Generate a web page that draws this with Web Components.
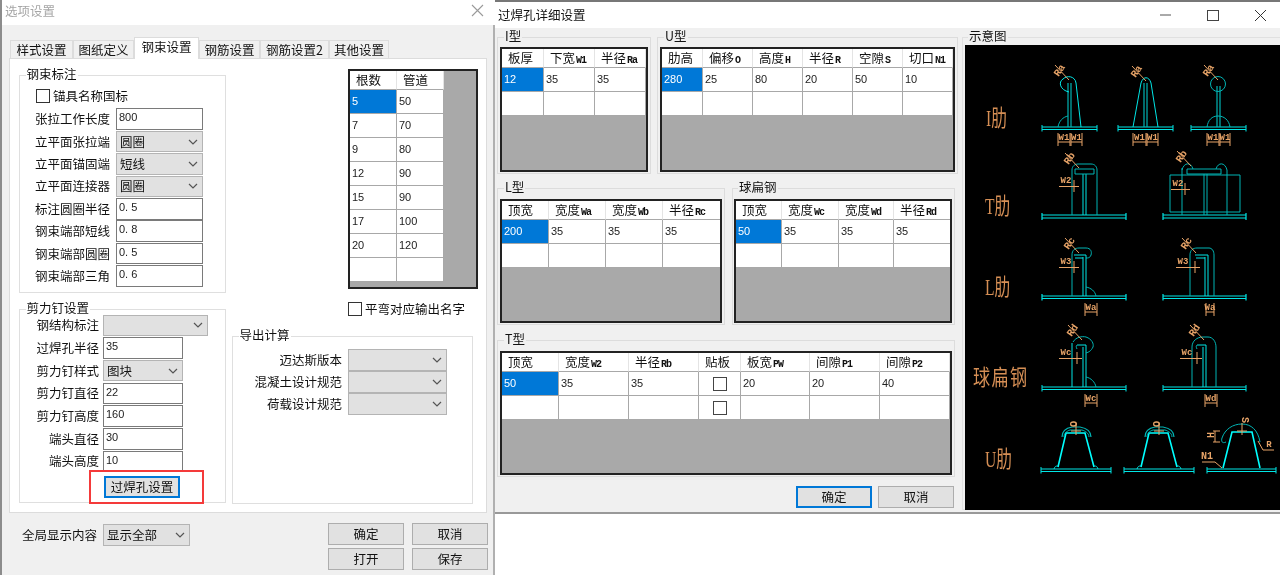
<!DOCTYPE html>
<html lang="zh">
<head>
<meta charset="utf-8">
<title>选项设置</title>
<style>
html, body { margin: 0; padding: 0; background: #fff; }
body { width: 1280px; height: 575px; overflow: hidden; font: 12.5px/16px "Noto Sans CJK SC", "Liberation Sans", sans-serif; color: #111; }
</style>
</head>
<body>
<app-desktop>
  <options-dialog></options-dialog>
  <hole-dialog></hole-dialog>
</app-desktop>

<script>
const NUM_FONT = '"Liberation Sans", "Noto Sans CJK SC", sans-serif';

class ShadowEl extends HTMLElement {
    constructor() {
        super();
        this.attachShadow({ mode: 'open' });
    }
    connectedCallback() {
        this.shadowRoot.innerHTML = this.markup();
    }
}

class AppDesktop extends ShadowEl {
    markup() {
        return `<style>
            :host { display: flex; width: 1280px; height: 575px; align-items: flex-start; background: #fff; filter: blur(.3px); }
        </style><slot></slot>`;
    }
}

// group box, legend sits on the border
class GroupBox extends ShadowEl {
    markup() {
        return `<style>
            :host { display: block; box-sizing: border-box; }
            fieldset { box-sizing: border-box; height: 100%; margin: 0; padding: 0; border: 1px solid var(--line, #dcdcdc); min-width: 0; }
            legend { margin-left: var(--lg, 6px); padding: 0 1px; height: 16px; line-height: 14px; white-space: nowrap; }
        </style>
        <fieldset><legend>${this.getAttribute('label')}</legend><slot></slot></fieldset>`;
    }
}

class FormRow extends ShadowEl {
    markup() {
        return `<style>
            :host { display: flex; align-items: center; height: var(--row, 22.4px); }
            .lb { box-sizing: border-box; width: var(--lw, 80px); padding-right: var(--lp, 6px); text-align: var(--la, left); white-space: nowrap; flex: none; }
        </style><div class="lb">${this.getAttribute('label')}</div><slot></slot>`;
    }
}

class TextBox extends ShadowEl {
    markup() {
        return `<style>
            :host { display: block; box-sizing: border-box; width: var(--cw, 87px); height: 21.5px; background: #fff; border: 1px solid #7a7a7a; padding-left: 2px; font: 11px/17px ${NUM_FONT}; color: #222; flex: none; }
        </style>${this.getAttribute('value')}`;
    }
}

class ComboBox extends ShadowEl {
    markup() {
        return `<style>
            :host { display: flex; box-sizing: border-box; width: var(--cw, 87px); height: 21.5px; align-items: center; justify-content: space-between; background: #e1e1e1; border: 1px solid #b4b4b4; padding: 0 4px 0 3px; flex: none; }
            svg { width: 10px; height: 6px; flex: none; }
        </style><span>${this.getAttribute('value') || ''}</span>
        <svg viewBox="0 0 10 6"><path d="M1 1l4 4 4-4" fill="none" stroke="#555" stroke-width="1.2"/></svg>`;
    }
}

class CheckBox extends ShadowEl {
    markup() {
        return `<style>
            :host { display: flex; align-items: center; gap: 3px; white-space: nowrap; }
            i { display: block; box-sizing: border-box; width: 14px; height: 14px; background: #fff; border: 1px solid #333; flex: none; }
        </style><i></i><slot></slot>`;
    }
}

class PushButton extends ShadowEl {
    markup() {
        return `<style>
            :host { display: flex; box-sizing: border-box; width: 76px; height: 22px; align-items: center; justify-content: center; background: #e1e1e1; border: 1px solid #adadad; flex: none; }
            :host([focused]) { border: 2px solid #0078d7; }
        </style><slot></slot>`;
    }
}

// red annotation frame drawn over the button
class RedMark extends ShadowEl {
    markup() {
        return `<style>
            :host { display: block; position: relative; width: fit-content; }
            .mark { position: absolute; left: -15px; top: -6px; width: 115px; height: 34px; box-sizing: border-box; border: 2.5px solid #f43a3a; pointer-events: none; }
        </style><slot></slot><div class="mark"></div>`;
    }
}

// cols="42,51,51" head="板厚|下宽W1" rows="12,35,35;,,"   a cell holding [] is a checkbox
class DataGrid extends ShadowEl {
    markup() {
        const cols = this.getAttribute('cols').split(',').map(c => c + 'px').join(' ');
        const head = this.getAttribute('head').split('|');
        const rows = this.getAttribute('rows').split(';').map(r => r.split(','));
        const headHtml = head.map(h => `<div class="h">${h.replace(/[A-Za-z0-9]+/, m => `<b>${m}</b>`)}</div>`).join('');
        const rowHtml = rows.map((r, ri) => r.map((c, ci) => {
            if (c === '[]') return `<div class="c box"><i></i></div>`;
            return `<div class="c${ri === 0 && ci === 0 ? ' sel' : ''}">${c}</div>`;
        }).join('')).join('');
        return `<style>
            :host { display: block; box-sizing: border-box; height: var(--h, 125px); background: #a9a9a9; border: 2px solid #222; overflow: hidden; }
            .g { display: grid; grid-template-columns: ${cols}; grid-auto-rows: 24px; grid-template-rows: var(--hh, 19px); width: fit-content; background: #fff; }
            .h { box-sizing: border-box; border-right: 1px solid #e4e4e4; border-bottom: 1px solid #a8a8a8; padding-left: 6px; line-height: 17px; white-space: nowrap; overflow: hidden; }
            .h b { font: 700 10px/17px "Liberation Mono", monospace; letter-spacing: -1px; margin-left: 1px; }
            .c { box-sizing: border-box; border-right: 1px solid #a8a8a8; border-bottom: 1px solid #a8a8a8; padding-left: 2px; font: 11px/23px ${NUM_FONT}; color: #222; }
            .sel { background: #0078d7; color: #fff; }
            .box { display: flex; align-items: center; justify-content: center; padding: 0; }
            .box i { display: block; box-sizing: border-box; width: 14px; height: 14px; border: 1px solid #444; }
        </style><div class="g">${headHtml}${rowHtml}</div>`;
    }
}

class OptionsDialog extends ShadowEl {
    markup() {
        const tabs = ['样式设置', '图纸定义', '钢束设置', '钢筋设置', '钢筋设置2', '其他设置'];
        const widths = [63, 61, 65, 61, 69, 60];
        const tabHtml = tabs.map((t, i) => `<div class="tab${i === 2 ? ' on' : ''}" style="width:${widths[i]}px">${t}</div>`).join('');
        return `<style>
            :host { display: block; box-sizing: border-box; width: 495px; height: 575px; background: #f0f0f0; border-left: 2px solid #8c8c8c; border-right: 2px solid #b0b0b0; flex: none; --lg: 5.5px; }
            .title { display: flex; justify-content: space-between; align-items: center; box-sizing: border-box; height: 25px; margin-right: -2px; padding: 0 11px 4px 3px; background: #fff; color: #a6a6a6; }
            .title svg { width: 13px; height: 13px; }
            .tabs { display: flex; align-items: flex-end; height: 21px; margin: 12px 0 0 8px; }
            .tab { box-sizing: border-box; height: 18px; text-align: center; line-height: 17px; border: 1px solid #dcdcdc; border-bottom: 0; margin-right: 0; background: #f0f0f0; white-space: nowrap; }
            .tab.on { height: 22px; line-height: 18px; background: #fff; margin-bottom: -1px; position: relative; z-index: 1; }
            .panel { box-sizing: border-box; width: 478px; height: 455px; margin-left: 7px; background: #fff; border: 1px solid #dcdcdc; padding: 8px 0 0 9px; display: grid; grid-template-columns: 207px 241px; column-gap: 6px; }
            .col { display: flex; flex-direction: column; }
            .g1 { height: 226px; --lw: 81px; --cw: 87px; padding: 0; }
            .inner1 { padding: 5px 0 0 15px; }
            .chk { height: 16px; margin-bottom: 4px; margin-left: 1px; }
            .g2 { height: 202px; margin-top: 8px; }
            .inner2 { margin-top: -3px; --lw: 83px; --lp: 4px; --la: right; --cw: 80px; --row: 22.7px; }
            .wide { --cw: 105px; }
            .btnwrap { margin: 3px 0 0 84px; }
            .side { padding-left: 116px; height: 220px; margin-top: 2px; }
            .side data-grid { width: 130px; --h: 220px; }
            .side2 { margin: 12px 0 0 116px; }
            .g3 { height: 176px; margin-top: 11px; }
            .inner3 { padding: 5px 0 0 0; --lw: 115px; --lp: 6px; --la: right; --cw: 99px; --row: 22px; }
            .foot { display: flex; justify-content: space-between; padding: 10px 5px 0 20px; }
            .foot-left { --lw: 81px; --cw: 87px; --row: 22px; margin-top: 1px; height: 22px; }
            .btns { display: grid; grid-template-columns: 76px 76px; column-gap: 8px; row-gap: 3px; }
        </style>
        <div class="title">选项设置
            <svg viewBox="0 0 13 13"><path d="M1 1l11 11M12 1L1 12" stroke="#9a9a9a" stroke-width="1.1" fill="none"/></svg>
        </div>
        <div class="tabs">${tabHtml}</div>
        <div class="panel">
            <div class="col">
                <group-box class="g1" label="钢束标注" style="--line:#dfdfdf">
                    <div class="inner1">
                        <check-box class="chk">锚具名称国标</check-box>
                        <form-row label="张拉工作长度"><text-box value="800"></text-box></form-row>
                        <form-row label="立平面张拉端"><combo-box value="圆圈"></combo-box></form-row>
                        <form-row label="立平面锚固端"><combo-box value="短线"></combo-box></form-row>
                        <form-row label="立平面连接器"><combo-box value="圆圈"></combo-box></form-row>
                        <form-row label="标注圆圈半径"><text-box value="0. 5"></text-box></form-row>
                        <form-row label="钢束端部短线"><text-box value="0. 8"></text-box></form-row>
                        <form-row label="钢束端部圆圈"><text-box value="0. 5"></text-box></form-row>
                        <form-row label="钢束端部三角"><text-box value="0. 6"></text-box></form-row>
                    </div>
                </group-box>
                <group-box class="g2" label="剪力钉设置" style="--line:#dfdfdf">
                    <div class="inner2">
                        <form-row class="wide" label="钢结构标注"><combo-box></combo-box></form-row>
                        <form-row label="过焊孔半径"><text-box value="35"></text-box></form-row>
                        <form-row label="剪力钉样式"><combo-box value="图块"></combo-box></form-row>
                        <form-row label="剪力钉直径"><text-box value="22"></text-box></form-row>
                        <form-row label="剪力钉高度"><text-box value="160"></text-box></form-row>
                        <form-row label="端头直径"><text-box value="30"></text-box></form-row>
                        <form-row label="端头高度"><text-box value="10"></text-box></form-row>
                        <div class="btnwrap"><red-mark><push-button focused>过焊孔设置</push-button></red-mark></div>
                    </div>
                </group-box>
            </div>
            <div class="col">
                <div class="side">
                    <data-grid cols="47,47" head="根数|管道" rows="5,50;7,70;9,80;12,90;15,90;17,100;20,120;," style="--h:220px"></data-grid>
                </div>
                <div class="side2"><check-box>平弯对应输出名字</check-box></div>
                <group-box class="g3" label="导出计算" style="--line:#dfdfdf">
                    <div class="inner3">
                        <form-row label="迈达斯版本"><combo-box></combo-box></form-row>
                        <form-row label="混凝土设计规范"><combo-box></combo-box></form-row>
                        <form-row label="荷载设计规范"><combo-box></combo-box></form-row>
                    </div>
                </group-box>
            </div>
        </div>
        <div class="foot">
            <form-row class="foot-left" label="全局显示内容"><combo-box value="显示全部"></combo-box></form-row>
            <div class="btns">
                <push-button>确定</push-button><push-button>取消</push-button>
                <push-button>打开</push-button><push-button>保存</push-button>
            </div>
        </div>`;
    }
}

class HoleDialog extends ShadowEl {
    markup() {
        return `<style>
            :host { display: block; box-sizing: border-box; width: 785px; height: 514px; margin-left: 0; background: #f0f0f0; border-top: 2px solid #777; border-bottom: 2px solid #999; flex: none; overflow: hidden; }
            .title { display: flex; justify-content: space-between; align-items: center; height: 26px; padding-left: 3px; background: #fff; }
            .ctl { display: flex; }
            .ctl svg { width: 48px; height: 26px; }
            .body { display: flex; }
            .left { width: 465px; flex: none; padding: 1px 0 0 2px; box-sizing: border-box; }
            .row { display: flex; }
            .r1 { height: 145px; }
            .r1 .gi { width: 154px; height: 145px; }
            .r1 .gu { width: 301px; height: 145px; margin-left: 6px; }
            .r2 { height: 145px; margin-top: 6px; }
            .r2 .gl { width: 228px; height: 145px; }
            .r2 .gb { width: 223px; height: 145px; margin-left: 7px; --lg: 5px; }
            .r2 .gb data-grid { margin-left: 1px; }
            .gt { width: 458px; height: 145px; margin-top: 7px; }
            data-grid { margin: 2px 2px 0 2px; --h: 125px; }
            .r2 data-grid, .gt data-grid { margin-top: 3px; --h: 124px; }
            .foot { display: flex; justify-content: flex-end; gap: 6px; padding: 9px 6px 0 0; }
            .foot push-button { height: 21.5px; }
            .right { flex: 1; margin-left: 2px; padding-top: 1px; --line: #e0e0e0; --lg: 5px; }
            rib-diagram { margin: 0 0 0 2px; }
        </style>
        <div class="title">过焊孔详细设置
            <div class="ctl">
                <svg viewBox="0 0 48 26"><path d="M24 13h11" stroke="#555" stroke-width="1"/></svg>
                <svg viewBox="0 0 48 26"><rect x="23.5" y="8.5" width="11" height="10" fill="none" stroke="#444"/></svg>
                <svg viewBox="0 0 48 26"><path d="M23 8l11 11M34 8L23 19" stroke="#333" fill="none"/></svg>
            </div>
        </div>
        <div class="body">
            <div class="left">
                <div class="row r1">
                    <group-box class="gi" label="I型"><data-grid cols="42,51,51" head="板厚|下宽W1|半径Ra" rows="12,35,35;,,"></data-grid></group-box>
                    <group-box class="gu" label="U型"><data-grid cols="41,50,50,50,50,50" head="肋高|偏移O|高度H|半径R|空隙S|切口N1" rows="280,25,80,20,50,10;,,,,,"></data-grid></group-box>
                </div>
                <div class="row r2">
                    <group-box class="gl" label="L型"><data-grid cols="47,57,57,58" head="顶宽|宽度Wa|宽度Wb|半径Rc" rows="200,35,35,35;,,,"></data-grid></group-box>
                    <group-box class="gb" label="球扁钢"><data-grid cols="46,57,55,57" head="顶宽|宽度Wc|宽度Wd|半径Rd" rows="50,35,35,35;,,,"></data-grid></group-box>
                </div>
                <group-box class="gt" label="T型"><data-grid cols="57,70,70,42,69,70,70" head="顶宽|宽度W2|半径Rb|贴板|板宽PW|间隙P1|间隙P2" rows="50,35,35,[],20,20,40;,,,[],,,"></data-grid></group-box>
                <div class="foot"><push-button focused>确定</push-button><push-button>取消</push-button></div>
            </div>
            <group-box class="right" label="示意图" style="height:482px"><rib-diagram></rib-diagram></group-box>
        </div>`;
    }
}

// rib section sketches, coordinates are page pixels (viewBox starts at the canvas corner)
class RibDiagram extends ShadowEl {
    markup() {
        const C = '#00e6e6', T = '#00b4b4', O = '#e8a468';
        const line = (d, col = C, w = 1) => `<path d="${d}" fill="none" stroke="${col}" stroke-width="${w}"/>`;
        const plate = (a, b, y, gap = 2.5, w = 1) => line(`M${a} ${y}H${b}M${a} ${y + gap}H${b}M${a} ${y - 2}v${gap + 4}M${b} ${y - 2}v${gap + 4}`, C, w);
        const small = (s, x, y, rot = 0, size = 9) => `<text x="${x}" y="${y}" font-size="${size}" font-weight="700" font-family="Liberation Mono" fill="${O}" text-anchor="middle"${rot ? ` transform="rotate(${rot} ${x} ${y})"` : ''}>${s}</text>`;
        const big = (s, x, y, sx = .82) => `<text transform="translate(${x} ${y}) scale(${sx} 1.2)" font-size="19" font-family='"Liberation Serif", "Noto Sans CJK SC", serif' fill="#d68f55">${s}</text>`;
        const brk = (a, b, top, s) => line(`M${a} ${top}v13M${b} ${top}v13M${a} ${top + 9}H${b}`, O) + small(s, (a + b) / 2, top + 7);
        const rad = (s, x, y) => small(s, x, y, -55, 10) + line(`M${x - 7} ${y - 7}l14 15`, O);
        const wdim = (s, x, y, cx) => small(s, x, y) + line(`M${x - 7} ${y + 3.5}H${cx + 5}M${cx} ${y - 3}v12`, O);

        let s = '';
        // labels
        s += big('I肋', 986, 126) + big('T肋', 985, 214) + big('L肋', 985, 295) + big('U肋', 985, 467);
        s += `<text transform="translate(973 385) scale(.95 1.2)" font-size="18" letter-spacing="1.5" font-family='"Noto Sans CJK SC", serif' fill="#d68f55">球扁钢</text>`;

        // I ribs
        s += plate(1042, 1097, 127) + plate(1118, 1173, 127) + plate(1191, 1246, 127);
        s += line('M1068 83V127M1071 83V127', T, 1.2);
        s += line('M1069 92C1060 90 1058 82 1063 79C1067 75 1075 76 1076 83L1081 127', C);
        s += line('M1058 127C1059 121 1063 117 1068 116', T);
        s += rad('Ra', 1062, 72) + brk(1058, 1070, 133, 'W1') + brk(1071, 1082, 133, 'W1');
        s += line('M1144 83V127M1147 83V127', T, 1.2);
        s += line('M1133 127L1141 83C1143 76 1149 76 1151 83L1158 127', C);
        s += rad('Ra', 1139, 73) + brk(1133, 1146, 133, 'W1') + brk(1147, 1158, 133, 'W1');
        s += line('M1217 86V127M1220 86V127', T, 1.2);
        s += `<circle cx="1218" cy="84" r="7.5" fill="none" stroke="${T}"/>`;
        s += line('M1207 127C1208 120 1212 116 1218 116C1224 116 1229 120 1230 127', T);
        s += rad('Ra', 1211, 72) + brk(1207, 1219, 133, 'W1') + brk(1220, 1230, 133, 'W1');

        // T ribs
        s += plate(1042, 1126, 215, 3, 1.2) + plate(1163, 1246, 215, 3, 1.2);
        s += line('M1083 174V215M1086 174V215', C);
        s += line('M1075 169H1094V174H1075Z', T);
        s += line('M1072 215V170C1072 166 1075 164 1078 164H1091C1095 164 1097 167 1097 170V215', T);
        s += rad('Rb', 1072, 160) + wdim('W2', 1066, 183, 1074);
        s += line('M1170 175H1240V212H1170Z', T);
        s += line('M1182 168V215M1227 170V215M1204 174V215M1207 174V215', T);
        s += line('M1187 169H1221V174H1187Z', T);
        s += line('M1182 170C1184 162 1191 162 1193 169M1216 169C1218 162 1225 162 1227 170', T);
        s += rad('Rb', 1184, 158) + wdim('W2', 1178, 186, 1185);

        // L ribs
        s += plate(1042, 1126, 296, 2.5, 1.2) + plate(1163, 1246, 296, 2.5, 1.2);
        s += line('M1072 296V255C1072 250 1075 248 1079 248H1086C1091 248 1092 252 1091 255C1090 258 1088 258 1086 258', T);
        s += line('M1074 255H1086V296M1083 257V296M1075 258H1083', C);
        s += line('M1086 287C1091 288 1095 291 1096 296', T);
        s += rad('Rc', 1072, 245) + wdim('W3', 1066, 264, 1074) + brk(1085, 1097, 303, 'Wa');
        s += line('M1190 296V255C1190 250 1193 248 1197 248H1209C1212 248 1214 251 1214 255V296', T);
        s += line('M1195 255H1208V296M1205 257V296M1196 258H1205', C);
        s += rad('Rc', 1189, 245) + wdim('W3', 1183, 264, 1195) + brk(1206, 1214, 303, 'Wa');

        // bulb flats
        s += plate(1042, 1126, 387) + plate(1163, 1246, 387);
        s += line('M1072 387V343M1083 347V387M1086 345V387M1077 345H1086', C);
        s += line('M1077 349C1076 347 1076 346 1077 345', T);
        s += line('M1073 342C1076 337 1082 336 1086 337C1092 339 1094 344 1093 347C1091 351 1089 352 1086 353', T);
        s += line('M1086 377C1091 378 1095 382 1096 387', T);
        s += rad('Rd', 1075, 332) + wdim('Wc', 1066, 355, 1077) + brk(1085, 1097, 394, 'Wc');
        s += line('M1192 387V347C1192 341 1197 337 1203 337H1208C1213 337 1216 342 1216 347V387', T);
        s += line('M1197 345H1206V387M1203 347V387', C);
        s += line('M1197 349C1196 347 1196 346 1197 345', T);
        s += rad('Rd', 1197, 332) + wdim('Wc', 1187, 355, 1197) + brk(1205, 1217, 394, 'Wd');

        // U ribs
        s += plate(1041, 1111, 469) + plate(1124, 1194, 469) + plate(1207, 1276, 469);
        const trough = dx => line(`M${1058 + dx} 467L${1066 + dx} 433H${1085 + dx}L${1094 + dx} 467`, '#0ff', 1.6)
            + line(`M${1062 + dx} 437C${1062 + dx} 431 ${1066 + dx} 428 ${1072 + dx} 427H${1080 + dx}C${1086 + dx} 428 ${1091 + dx} 431 ${1091 + dx} 437`, T, 1.2)
            + line(`M${1064 + dx} 437C${1064 + dx} 433 ${1067 + dx} 431 ${1070 + dx} 430H${1082 + dx}C${1085 + dx} 431 ${1089 + dx} 433 ${1089 + dx} 437`, T)
            + line(`M${1054 + dx} 469C${1055 + dx} 466 ${1056 + dx} 466 ${1058 + dx} 466M${1098 + dx} 469C${1097 + dx} 466 ${1096 + dx} 466 ${1094 + dx} 466`, C)
            + small('O', 1070 + dx, 424, 90, 10) + line(`M${1076 + dx} 423V435M${1071 + dx} 431H${1081 + dx}`, O);
        s += trough(0) + trough(83);
        s += line('M1223 468L1232 432H1252L1260 468', '#0ff', 1.6);
        s += line('M1226 442C1222 444 1221 441 1222 438C1225 429 1233 424 1242 424C1251 424 1258 430 1260 442', T);
        s += small('S', 1242, 420, 90, 10) + line('M1242 423V435M1237 431H1247', O);
        s += small('H', 1207, 435, 90, 10) + line('M1213 431H1220M1213 442H1220M1215 431V442', O);
        s += small('R', 1269, 447) + line('M1258 441L1263 450H1274', O);
        s += small('N1', 1207, 459, 0, 10) + line('M1202 462H1215L1222 468', O);

        return `<style>
            :host { display: block; width: 315px; height: 465px; background: #000; }
            svg { display: block; }
        </style>
        <svg width="315" height="465" viewBox="965 45 315 465" xmlns="http://www.w3.org/2000/svg">${s}</svg>`;
    }
}

customElements.define('app-desktop', AppDesktop);
customElements.define('group-box', GroupBox);
customElements.define('form-row', FormRow);
customElements.define('text-box', TextBox);
customElements.define('combo-box', ComboBox);
customElements.define('check-box', CheckBox);
customElements.define('push-button', PushButton);
customElements.define('red-mark', RedMark);
customElements.define('data-grid', DataGrid);
customElements.define('options-dialog', OptionsDialog);
customElements.define('hole-dialog', HoleDialog);
customElements.define('rib-diagram', RibDiagram);
</script>
</body>
</html>
